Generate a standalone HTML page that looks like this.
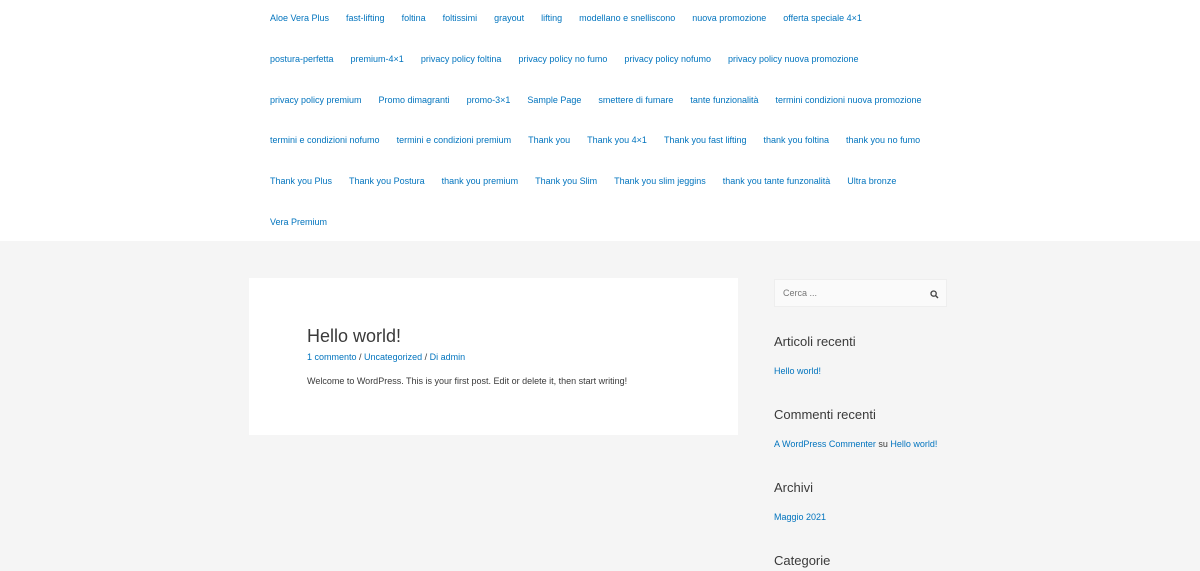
<!DOCTYPE html>
<html><head><meta charset="utf-8"><style>
body{margin:0;width:1200px;height:571px;overflow:hidden;background:#f5f5f5;font-family:"Liberation Sans",sans-serif;}
a{color:#0274be;text-decoration:none}
.hdr{position:absolute;left:0;top:0;width:1200px;height:241px;background:#fff}
.row{position:absolute;left:270px;display:flex;gap:17px;font-size:9px;line-height:12px;white-space:nowrap}
.box{position:absolute;left:249px;top:278px;width:489px;height:157px;background:#fff}
.abs{position:absolute;white-space:nowrap}
h3{margin:0;font-weight:normal;font-size:13px;color:#3a3a3a}
</style></head><body>
<div class="hdr">
<div class="row" style="top:12px"><a>Aloe Vera Plus</a><a>fast-lifting</a><a>foltina</a><a>foltissimi</a><a>grayout</a><a>lifting</a><a>modellano e snelliscono</a><a>nuova promozione</a><a>offerta speciale 4×1</a></div>
<div class="row" style="top:53px"><a>postura-perfetta</a><a>premium-4×1</a><a>privacy policy foltina</a><a>privacy policy no fumo</a><a>privacy policy nofumo</a><a>privacy policy nuova promozione</a></div>
<div class="row" style="top:94px"><a>privacy policy premium</a><a>Promo dimagranti</a><a>promo-3×1</a><a>Sample Page</a><a>smettere di fumare</a><a>tante funzionalità</a><a>termini condizioni nuova promozione</a></div>
<div class="row" style="top:134px"><a>termini e condizioni nofumo</a><a>termini e condizioni premium</a><a>Thank you</a><a>Thank you 4×1</a><a>Thank you fast lifting</a><a>thank you foltina</a><a>thank you no fumo</a></div>
<div class="row" style="top:175px"><a>Thank you Plus</a><a>Thank you Postura</a><a>thank you premium</a><a>Thank you Slim</a><a>Thank you slim jeggins</a><a>thank you tante funzonalità</a><a>Ultra bronze</a></div>
<div class="row" style="top:216px"><a>Vera Premium</a></div>
</div>
<div class="box"></div>
<div class="abs" style="left:307px;top:326px;font-size:18px;color:#3a3a3a">Hello world!</div>
<div class="abs" style="left:307px;top:352px;font-size:9px;color:#3a3a3a"><a>1 commento</a> / <a>Uncategorized</a> / <a>Di admin</a></div>
<div class="abs" style="left:307px;top:376px;font-size:9px;color:#3a3a3a">Welcome to WordPress. This is your first post. Edit or delete it, then start writing!</div>
<div class="abs" style="left:774px;top:279px;width:173px;height:28px;background:#fafafa;border:1px solid #eee;box-sizing:border-box"></div>
<div class="abs" style="left:783px;top:288px;font-size:9px;color:#777">Cerca ...</div>
<svg class="abs" style="left:930px;top:290px" width="9" height="9" viewBox="0 0 9 9"><circle cx="3.6" cy="3.6" r="2.6" fill="none" stroke="#444" stroke-width="1.3"/><path d="M5.5 5.5L8 8" stroke="#444" stroke-width="1.4"/></svg>
<h3 class="abs" style="left:774px;top:334px">Articoli recenti</h3>
<div class="abs" style="left:774px;top:366px;font-size:9px"><a>Hello world!</a></div>
<h3 class="abs" style="left:774px;top:407px">Commenti recenti</h3>
<div class="abs" style="left:774px;top:439px;font-size:9px;color:#3a3a3a"><a>A WordPress Commenter</a> su <a>Hello world!</a></div>
<h3 class="abs" style="left:774px;top:480px">Archivi</h3>
<div class="abs" style="left:774px;top:512px;font-size:9px"><a>Maggio 2021</a></div>
<h3 class="abs" style="left:774px;top:553px">Categorie</h3>
</body></html>
